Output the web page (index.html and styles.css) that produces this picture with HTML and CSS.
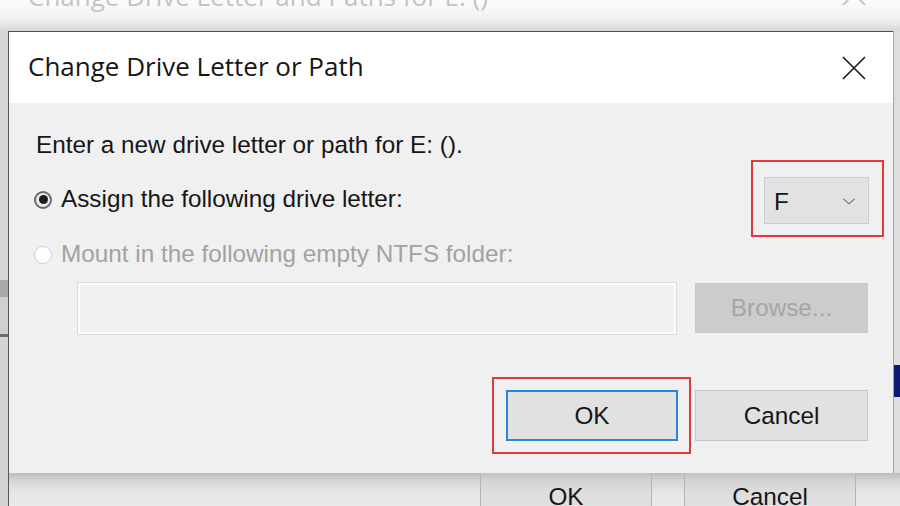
FILE: index.html
```html
<!DOCTYPE html>
<html>
<head>
<meta charset="utf-8">
<title>Change Drive Letter or Path</title>
<link rel="stylesheet" href="styles.css">
</head>
<body>
<div class="screen">
  <div class="back-title">
    <span class="back-title-text">Change Drive Letter and Paths for E: ()</span>
    <svg class="back-close" width="24" height="24" viewBox="0 0 24 24"><path d="M1 1 L23 23 M23 1 L1 23" stroke="#b9b9b9" stroke-width="1.6" fill="none"/></svg>
  </div>
  <div class="lower">
    <div class="left-edge"></div>
    <div class="center">
      <div class="dialog-row">
        <div class="dialog">
          <div class="titlebar">
            <span class="title">Change Drive Letter or Path</span>
            <svg class="close" width="24" height="24" viewBox="0 0 24 24"><path d="M1 1 L23 23 M23 1 L1 23" stroke="#1a1a1a" stroke-width="1.6" fill="none"/></svg>
          </div>
          <div class="body">
            <div class="intro">Enter a new drive letter or path for E: ().</div>
            <div class="row row-assign">
              <div class="option"><span class="radio checked"></span><span>Assign the following drive letter:</span></div>
              <div class="highlight highlight-drive">
                <div class="dropdown">
                  <span class="drive-letter">F</span>
                  <svg class="chevron" width="12" height="7" viewBox="0 0 12 7"><path d="M0.5 0.8 L6 5.8 L11.5 0.8" stroke="#6a6a6a" stroke-width="1.1" fill="none"/></svg>
                </div>
              </div>
            </div>
            <div class="row row-mount">
              <div class="option disabled"><span class="radio"></span><span>Mount in the following empty NTFS folder:</span></div>
            </div>
            <div class="folder-row">
              <div class="folder-input"></div>
              <div class="btn btn-disabled">Browse...</div>
            </div>
            <div class="actions">
              <div class="highlight highlight-ok">
                <div class="btn btn-default">OK</div>
              </div>
              <div class="btn btn-cancel">Cancel</div>
            </div>
          </div>
        </div>
        <div class="right-edge"></div>
      </div>
      <div class="back-bottom">
        <div class="back-btn back-ok">OK</div>
        <div class="back-btn back-cancel">Cancel</div>
      </div>
    </div>
  </div>
</div>
</body>
</html>
```

FILE: styles.css
```css
* {
  box-sizing: border-box;
}

html, body {
  margin: 0;
  padding: 0;
}

body {
  width: 900px;
  height: 506px;
  overflow: hidden;
  background: #e6e6e6;
  font-family: "Liberation Sans", Arial, sans-serif;
  font-size: 24.3px;
  color: #161616;
}

.screen {
  width: 900px;
  height: 506px;
  display: flex;
  flex-direction: column;
  overflow: hidden;
}

/* background window title strip */
.back-title {
  height: 31px;
  flex: none;
  display: flex;
  justify-content: space-between;
  align-items: flex-start;
  padding: 0 34px 0 28px;
  overflow: hidden;
  background: linear-gradient(to bottom, #fbfbfb 0%, #f5f5f5 45%, #e9e9e9 75%, #d6d6d6 100%);
}

.back-title-text {
  font-family: "Open Sans", "Noto Sans", sans-serif;
  font-size: 26px;
  line-height: 26px;
  margin-top: -17px;
  color: #c3c3c3;
  white-space: nowrap;
}

.back-close {
  margin-top: -18px;
}

.lower {
  flex: 1;
  display: flex;
}

.left-edge {
  width: 9px;
  flex: none;
  border-right: 1px solid #555555;
  background: linear-gradient(to bottom,
    #d6d6d6 0px, #d6d6d6 249px,
    #a9a9a9 249px, #a9a9a9 266px,
    #d0d0d0 266px, #d0d0d0 303px,
    #6c6c6c 303px, #6c6c6c 306px,
    #d4d4d4 306px, #d4d4d4 100%);
}

.center {
  flex: 1;
  display: flex;
  flex-direction: column;
}

.dialog-row {
  height: 442px;
  flex: none;
  display: flex;
}

.dialog {
  width: 884px;
  flex: none;
  display: flex;
  flex-direction: column;
  border-top: 1px solid #4f4f4f;
  background: #f0f0f0;
}

.titlebar {
  height: 71px;
  flex: none;
  background: #ffffff;
  display: flex;
  align-items: center;
  justify-content: space-between;
  padding: 0 27px 4px 19px;
}

.title {
  font-family: "Open Sans", "Noto Sans", sans-serif;
  font-size: 26px;
  color: #161616;
  white-space: nowrap;
}

.close {
  margin-top: 5px;
}

.body {
  flex: 1;
  display: flex;
  flex-direction: column;
  padding-top: 27px;
}

.intro {
  height: 30px;
  line-height: 30px;
  padding-left: 27px;
  white-space: nowrap;
}

.row {
  display: flex;
  align-items: center;
  justify-content: space-between;
  padding-left: 25px;
}

.row-assign {
  height: 77px;
  padding-right: 9px;
}

.row-mount {
  height: 34px;
}

.option {
  display: flex;
  align-items: center;
  gap: 9px;
  white-space: nowrap;
}

.option.disabled {
  color: #a2a2a2;
}

.radio {
  width: 18px;
  height: 18px;
  border-radius: 50%;
  border: 1px solid #d0d0d0;
  background: #ffffff;
  display: flex;
  align-items: center;
  justify-content: center;
  margin-top: 2px;
}

.radio.checked {
  border: 2px solid #6a6a6a;
  background: #ececec;
}

.radio.checked::after {
  content: "";
  width: 9px;
  height: 9px;
  border-radius: 50%;
  background: #1c1c1c;
}

.highlight {
  border: 2px solid #e0393c;
}

.highlight-drive {
  padding: 15px 13px 11px 11px;
}

.dropdown {
  width: 105px;
  height: 47px;
  border: 1px solid #cdcdcd;
  background: #e2e2e2;
  display: flex;
  align-items: center;
  justify-content: space-between;
  padding: 2px 13px 0 9px;
}

.folder-row {
  margin-top: 11px;
  padding-left: 68px;
  display: flex;
  align-items: flex-start;
  gap: 18px;
}

.folder-input {
  width: 600px;
  height: 53px;
  border: 1px solid #dadada;
  box-shadow: inset 0 0 0 2px #fcfcfc;
  background: #f0f0f0;
}

.btn {
  width: 173px;
  height: 51px;
  display: flex;
  align-items: center;
  justify-content: center;
  background: #e1e1e1;
  border: 1px solid #c4c4c4;
  white-space: nowrap;
}

.btn-disabled {
  height: 50px;
  margin-top: 1px;
  background: #cccccc;
  border-color: #c9c9c9;
  color: #a5a5a5;
}

.actions {
  margin-top: 42px;
  display: flex;
  justify-content: flex-end;
  align-items: center;
  gap: 4px;
  padding-right: 25px;
}

.highlight-ok {
  padding: 11px 11px 11px 12px;
}

.btn-default {
  width: 172px;
  border: 2px solid #2a84dc;
}

.right-edge {
  flex: 1;
  border-left: 1px solid #a3a3a3;
  background: linear-gradient(to bottom,
    #dedede 0px, #dedede 334px,
    #0e1878 334px, #0e1878 366px,
    #dedede 366px, #dedede 100%);
}

/* background window bottom */
.back-bottom {
  flex: 1;
  display: flex;
  padding-left: 471px;
  gap: 32px;
  overflow: hidden;
  background: linear-gradient(to bottom, #bdbdbd 0px, #d6d6d6 8px, #e6e6e6 20px, #ebebeb 100%);
}

.back-btn {
  width: 172px;
  height: 40px;
  flex: none;
  border-left: 1px solid #b3b3b3;
  border-right: 1px solid #b3b3b3;
  background: linear-gradient(to bottom, #c2c2c2 0px, #d4d4d4 8px, #dedede 20px, #e1e1e1 100%);
  text-align: center;
  line-height: 24px;
  padding-top: 12px;
}
```
